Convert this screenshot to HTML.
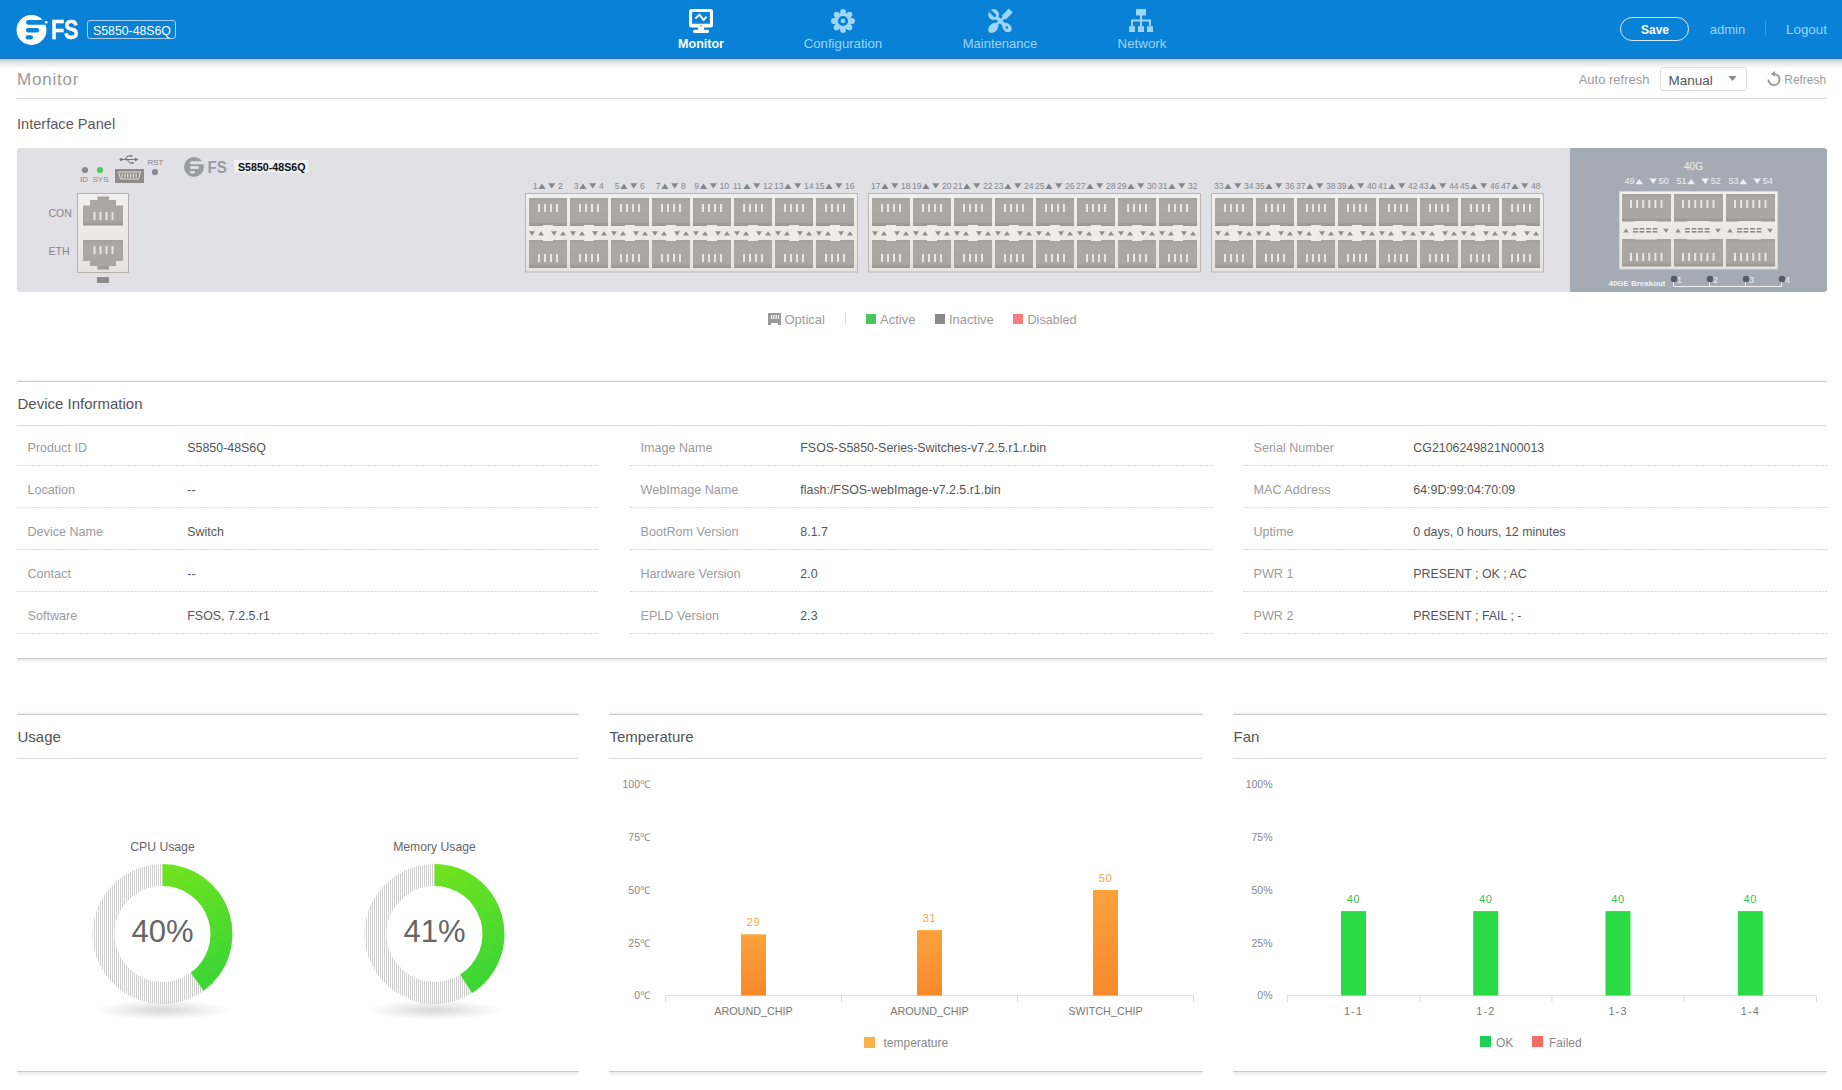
<!DOCTYPE html><html><head><meta charset="utf-8"><style>
html,body{margin:0;padding:0;width:1842px;height:1090px;overflow:hidden;background:#fff;font-family:"Liberation Sans", sans-serif;}
.t{position:absolute;white-space:nowrap;}
svg{position:absolute;overflow:visible}
</style></head><body>
<div style="position:absolute;left:0px;top:0px;width:1842px;height:58px;background:#0981d6;"></div>
<div style="position:absolute;left:0px;top:58px;width:1842px;height:1px;background:#2774b0;"></div>
<div style="position:absolute;left:0px;top:59px;width:1842px;height:1px;background:#a8cbe6;"></div>
<div style="position:absolute;left:0px;top:60px;width:1842px;height:9px;background:linear-gradient(#c7d0d9,#e2e4e6 25%,#f3f3f3 60%,#fff);"></div>
<svg style="left:0;top:0" width="200" height="58">
<circle cx="31.5" cy="30" r="15" fill="#fff"/>
<rect x="26" y="20" width="22" height="4.8" rx="2.4" fill="#0a83d8"/>
<rect x="26" y="28" width="13.2" height="4.6" rx="2.3" fill="#0a83d8"/>
<rect x="25.6" y="35.2" width="7.4" height="4.2" rx="2.1" fill="#0a83d8"/>
<circle cx="46.2" cy="22.3" r="1.3" fill="#fff"/>
</svg>
<div class="t" style="left:51.4px;top:16.54px;font-size:27px;line-height:27px;color:#fff;font-weight:700;transform:scaleX(0.81);transform-origin:0 0;letter-spacing:-0.3px;-webkit-text-stroke:0.45px #fff;">FS</div>
<div style="position:absolute;left:87px;top:20px;width:89px;height:19px;border:1px solid #a9d3f5;border-radius:3px;box-sizing:border-box;"></div>
<div class="t" style="left:93px;top:24.59px;font-size:12.3px;line-height:12.3px;color:#fff;font-weight:400;">S5850-48S6Q</div>
<svg style="left:689px;top:9px" width="24" height="24" viewBox="0 0 24 24">
<path d="M2.5,0 H21.5 A2.5,2.5 0 0 1 24,2.5 V16.1 A2.5,2.5 0 0 1 21.5,18.6 H2.5 A2.5,2.5 0 0 1 0,16.1 V2.5 A2.5,2.5 0 0 1 2.5,0 Z M3.1,3 V14.8 H20.9 V3 Z" fill="#fff" fill-rule="evenodd"/>
<polyline points="6.4,9.5 10.5,5.7 14.6,11 17.5,7.6" fill="none" stroke="#fff" stroke-width="1.9"/>
<path d="M8.6,18 H15.4 L14.6,21.2 H9.4 Z" fill="#fff"/>
<rect x="4" y="20.8" width="16" height="3.1" rx="1.5" fill="#fff"/>
<circle cx="12.2" cy="16.8" r="0.8" fill="#2a6aa0"/>
</svg>
<div class="t" style="left:401px;width:600px;text-align:center;top:38.22px;font-size:12.5px;line-height:12.5px;color:#fff;font-weight:700;">Monitor</div>
<svg style="left:831px;top:9px" width="24" height="24" viewBox="0 0 24 24">
<circle cx="12" cy="12" r="8.6" fill="#9dd5fb"/><circle cx="12.00" cy="2.90" r="2.9" fill="#9dd5fb"/><circle cx="18.43" cy="5.57" r="2.9" fill="#9dd5fb"/><circle cx="21.10" cy="12.00" r="2.9" fill="#9dd5fb"/><circle cx="18.43" cy="18.43" r="2.9" fill="#9dd5fb"/><circle cx="12.00" cy="21.10" r="2.9" fill="#9dd5fb"/><circle cx="5.57" cy="18.43" r="2.9" fill="#9dd5fb"/><circle cx="2.90" cy="12.00" r="2.9" fill="#9dd5fb"/><circle cx="5.57" cy="5.57" r="2.9" fill="#9dd5fb"/>
<circle cx="12" cy="12" r="5.1" fill="#0981d6"/>
<circle cx="12" cy="12" r="2.3" fill="#9dd5fb"/>
</svg>
<div class="t" style="left:543px;width:600px;text-align:center;top:36.83px;font-size:13.2px;line-height:13.2px;color:#9dd5fb;font-weight:400;">Configuration</div>
<svg style="left:980px;top:5px" width="40" height="32" viewBox="0 0 40 32">
<defs><mask id="wm" maskUnits="userSpaceOnUse" x="0" y="0" width="40" height="32">
<rect x="0" y="0" width="40" height="32" fill="#fff"/>
<rect x="6.5" y="-1.5" width="8" height="3" fill="#000" transform="translate(13.8,9.6) rotate(45) translate(-12,0)"/>
<circle cx="26.9" cy="22.6" r="1.25" fill="#000"/>
</mask></defs>
<g fill="#9dd5fb" mask="url(#wm)">
<circle cx="13.6" cy="9.5" r="5.4"/>
<line x1="13.6" y1="9.5" x2="27" y2="22.6" stroke="#9dd5fb" stroke-width="3.6"/>
<ellipse cx="27" cy="22.6" rx="5.3" ry="4.1" transform="rotate(45 27 22.6)"/>
</g>
<g fill="#9dd5fb">
<rect x="-5" y="-2.8" width="10" height="5.6" transform="translate(27.2,9.1) rotate(-45)"/>
<line x1="26" y1="10.5" x2="14" y2="22" stroke="#9dd5fb" stroke-width="2.6"/>
<ellipse cx="13.3" cy="22.8" rx="6" ry="4.1" transform="rotate(-45 13.3 22.8)"/>
</g>
</svg>
<div class="t" style="left:700px;width:600px;text-align:center;top:37.00px;font-size:13px;line-height:13px;color:#9dd5fb;font-weight:400;">Maintenance</div>
<svg style="left:1129px;top:9px" width="24" height="24" viewBox="0 0 24 24">
<rect x="7" y="0" width="10" height="6.5" fill="#9dd5fb"/>
<rect x="11" y="6" width="2" height="5" fill="#9dd5fb"/>
<rect x="2" y="10.5" width="20" height="2" fill="#9dd5fb"/>
<rect x="2" y="11" width="2" height="6" fill="#9dd5fb"/>
<rect x="11" y="11" width="2" height="6" fill="#9dd5fb"/>
<rect x="20" y="11" width="2" height="6" fill="#9dd5fb"/>
<rect x="0" y="17.2" width="6" height="5.8" fill="#9dd5fb"/>
<rect x="9" y="17.2" width="6" height="5.8" fill="#9dd5fb"/>
<rect x="18" y="17.2" width="6" height="5.8" fill="#9dd5fb"/>
</svg>
<div class="t" style="left:842px;width:600px;text-align:center;top:36.74px;font-size:13.3px;line-height:13.3px;color:#9dd5fb;font-weight:400;">Network</div>
<div style="position:absolute;left:1620px;top:17px;width:69px;height:24px;border:1.5px solid #d4ebfb;border-radius:12px;box-sizing:border-box;"></div>
<div class="t" style="left:1355px;width:600px;text-align:center;top:24.14px;font-size:12px;line-height:12px;color:#fff;font-weight:700;">Save</div>
<div class="t" style="left:1427.5px;width:600px;text-align:center;top:23.00px;font-size:13px;line-height:13px;color:#9dd5fb;font-weight:400;">admin</div>
<div style="position:absolute;left:1765px;top:21px;width:1px;height:15px;background:#3d9be0;"></div>
<div class="t" style="left:1506.5px;width:600px;text-align:center;top:22.66px;font-size:13.4px;line-height:13.4px;color:#9dd5fb;font-weight:400;">Logout</div>
<div class="t" style="left:17px;top:71.01px;font-size:17px;line-height:17px;color:#9a9a9a;font-weight:400;letter-spacing:0.8px;">Monitor</div>
<div class="t" style="right:192.5px;text-align:right;top:73.00px;font-size:13px;line-height:13px;color:#9b9b9b;font-weight:400;">Auto refresh</div>
<div style="position:absolute;left:1660px;top:67px;width:87px;height:24px;border:1px solid #dcdcdc;border-radius:3px;box-sizing:border-box;background:#fff;"></div>
<div class="t" style="left:1668.5px;top:73.57px;font-size:13.5px;line-height:13.5px;color:#555;font-weight:400;">Manual</div>
<svg style="left:1728px;top:76px" width="9" height="6"><polygon points="0.5,0 8.5,0 4.5,5" fill="#888"/></svg>
<svg style="left:1760px;top:66px" width="30" height="26" viewBox="0 0 30 26">
<path d="M8.4,13.5 A5.6,5.6 0 1 0 14.4,7.9" fill="none" stroke="#999" stroke-width="1.9"/>
<polygon points="10.8,7.9 15,5.1 15,10.7" fill="#999"/>
</svg>
<div class="t" style="right:16px;text-align:right;top:73.84px;font-size:12px;line-height:12px;color:#9b9b9b;font-weight:400;font-size:11.9px;">Refresh</div>
<div style="position:absolute;left:17px;top:98px;width:1810px;height:1px;background:#d6d6d6;"></div>
<div class="t" style="left:17px;top:116.64px;font-size:14.6px;line-height:14.6px;color:#5a5a5a;font-weight:400;">Interface Panel</div>
<svg style="left:0;top:0" width="1842" height="300"><defs><linearGradient id="pg" x1="0" y1="0" x2="0" y2="1"><stop offset="0" stop-color="#a3a09d"/><stop offset="0.15" stop-color="#aba8a5"/><stop offset="0.85" stop-color="#a9a6a3"/><stop offset="1" stop-color="#979492"/></linearGradient><linearGradient id="fr" x1="0" y1="0" x2="0" y2="1"><stop offset="0" stop-color="#f2f0ee"/><stop offset="1" stop-color="#e6e3df"/></linearGradient></defs><path d="M20,148 H1570 V292 H20 A3,3 0 0 1 17,289 V151 A3,3 0 0 1 20,148 Z" fill="#e1e0e5"/><path d="M1570,148 H1824 A3,3 0 0 1 1827,151 V289 A3,3 0 0 1 1824,292 H1570 Z" fill="#a4abb5"/><circle cx="85" cy="170" r="3.1" fill="#8a8b90"/><circle cx="100" cy="170" r="3.1" fill="#4ec95c"/><circle cx="155" cy="172" r="3.1" fill="#8a8b90"/><text x="80" y="182" font-size="8" fill="#85868b" font-family="Liberation Sans">ID</text><text x="92.5" y="182" font-size="8" fill="#85868b" font-family="Liberation Sans">SYS</text><text x="147.5" y="165" font-size="8" fill="#85868b" font-family="Liberation Sans">RST</text><g fill="none" stroke="#77787c" stroke-width="1.1"><path d="M121,159.5 H136"/><path d="M125,159.5 L128,156 H131"/><path d="M127,159.5 L130,163 H132"/></g><circle cx="121" cy="159.5" r="1.5" fill="#77787c"/><polygon points="135,157.5 138.5,159.5 135,161.5" fill="#77787c"/><circle cx="131.5" cy="156" r="1" fill="#77787c"/><rect x="131.5" y="162" width="2" height="2" fill="#77787c"/><rect x="115" y="169" width="29" height="14" fill="#8e8c8a"/><path d="M118.5,172 H140.5 L138.5,179 H120.5 Z" fill="none" stroke="#e6e2dc" stroke-width="1"/><rect x="121.5" y="173.5" width="1.2" height="4" fill="#e6e2dc"/><rect x="124.3" y="173.5" width="1.2" height="4" fill="#e6e2dc"/><rect x="127.1" y="173.5" width="1.2" height="4" fill="#e6e2dc"/><rect x="129.9" y="173.5" width="1.2" height="4" fill="#e6e2dc"/><rect x="132.7" y="173.5" width="1.2" height="4" fill="#e6e2dc"/><rect x="135.5" y="173.5" width="1.2" height="4" fill="#e6e2dc"/><circle cx="194" cy="167" r="10" fill="#9a9ba3"/><rect x="190" y="161.2" width="15" height="3" rx="1.5" fill="#e1e0e5"/><rect x="190" y="166" width="9" height="3" rx="1.5" fill="#e1e0e5"/><rect x="190" y="171" width="5" height="2.6" rx="1.3" fill="#e1e0e5"/><text x="207.5" y="172.6" style="font-size:16.8px;font-weight:bold;font-family:Liberation Sans" fill="#9a9ba3" transform="translate(207.5,0) scale(0.9,1) translate(-207.5,0)">FS</text><rect x="234" y="160" width="74" height="12.5" fill="#eef0f4"/><text x="238" y="171" font-size="10" font-weight="700" fill="#111" font-family="Liberation Sans" textLength="67.5" lengthAdjust="spacingAndGlyphs">S5850-48S6Q</text><text x="48.5" y="217" font-size="10.5" fill="#85868b" font-family="Liberation Sans">CON</text><text x="48.5" y="255" font-size="10.5" fill="#85868b" font-family="Liberation Sans">ETH</text><rect x="77.5" y="193.5" width="51" height="79" fill="url(#fr)" stroke="#b7b1ab" stroke-width="1"/><path d="M97.5,196.5 H109 V200 H116 V205.5 H123 V225.5 H83 V205.5 H90 V200 H97.5 Z" fill="url(#pg)"/><path d="M97.5,269.5 H109 V266 H116 V261 H123 V240 H83 V261 H90 V266 H97.5 Z" fill="url(#pg)"/><rect x="93.5" y="212" width="2" height="8" fill="#e9e5df"/><rect x="93.5" y="246" width="2" height="8" fill="#e9e5df"/><rect x="99.5" y="212" width="2" height="8" fill="#e9e5df"/><rect x="99.5" y="246" width="2" height="8" fill="#e9e5df"/><rect x="105.5" y="212" width="2" height="8" fill="#e9e5df"/><rect x="105.5" y="246" width="2" height="8" fill="#e9e5df"/><rect x="111.5" y="212" width="2" height="8" fill="#e9e5df"/><rect x="111.5" y="246" width="2" height="8" fill="#e9e5df"/><rect x="97" y="277" width="12" height="6" fill="#8e8c8a"/><rect x="525.5" y="193.5" width="332" height="78.5" fill="url(#fr)" stroke="#bab5b0" stroke-width="1"/><text x="532.70" y="189.00" font-size="8.6" fill="#85868b" font-family="Liberation Sans">1</text><polygon points="538.35,188.90 545.55,188.90 541.95,183.60" fill="#85868b"/><polygon points="548.15,183.30 555.35,183.30 551.75,188.60" fill="#85868b"/><text x="557.95" y="189.00" font-size="8.6" fill="#85868b" font-family="Liberation Sans">2</text><rect x="529" y="198" width="38" height="28" fill="url(#pg)"/><rect x="529" y="240" width="38" height="28" fill="url(#pg)"/><rect x="538" y="204" width="2" height="8" fill="#e9e5df"/><rect x="538" y="254" width="2" height="8" fill="#e9e5df"/><rect x="544" y="204" width="2" height="8" fill="#e9e5df"/><rect x="544" y="254" width="2" height="8" fill="#e9e5df"/><rect x="550" y="204" width="2" height="8" fill="#e9e5df"/><rect x="550" y="254" width="2" height="8" fill="#e9e5df"/><rect x="556" y="204" width="2" height="8" fill="#e9e5df"/><rect x="556" y="254" width="2" height="8" fill="#e9e5df"/><rect x="543" y="225" width="10" height="16" fill="#efedeb"/><polygon points="529.00,231.30 535.00,231.30 532.00,235.70" fill="#8f8d8b"/><polygon points="538.00,235.60 544.00,235.60 541.00,231.20" fill="#8f8d8b"/><polygon points="551.00,231.30 557.00,231.30 554.00,235.70" fill="#8f8d8b"/><polygon points="560.00,235.60 566.00,235.60 563.00,231.20" fill="#8f8d8b"/><text x="573.70" y="189.00" font-size="8.6" fill="#85868b" font-family="Liberation Sans">3</text><polygon points="579.35,188.90 586.55,188.90 582.95,183.60" fill="#85868b"/><polygon points="589.15,183.30 596.35,183.30 592.75,188.60" fill="#85868b"/><text x="598.95" y="189.00" font-size="8.6" fill="#85868b" font-family="Liberation Sans">4</text><rect x="570" y="198" width="38" height="28" fill="url(#pg)"/><rect x="570" y="240" width="38" height="28" fill="url(#pg)"/><rect x="579" y="204" width="2" height="8" fill="#e9e5df"/><rect x="579" y="254" width="2" height="8" fill="#e9e5df"/><rect x="585" y="204" width="2" height="8" fill="#e9e5df"/><rect x="585" y="254" width="2" height="8" fill="#e9e5df"/><rect x="591" y="204" width="2" height="8" fill="#e9e5df"/><rect x="591" y="254" width="2" height="8" fill="#e9e5df"/><rect x="597" y="204" width="2" height="8" fill="#e9e5df"/><rect x="597" y="254" width="2" height="8" fill="#e9e5df"/><rect x="584" y="225" width="10" height="16" fill="#efedeb"/><polygon points="570.00,231.30 576.00,231.30 573.00,235.70" fill="#8f8d8b"/><polygon points="579.00,235.60 585.00,235.60 582.00,231.20" fill="#8f8d8b"/><polygon points="592.00,231.30 598.00,231.30 595.00,235.70" fill="#8f8d8b"/><polygon points="601.00,235.60 607.00,235.60 604.00,231.20" fill="#8f8d8b"/><text x="614.70" y="189.00" font-size="8.6" fill="#85868b" font-family="Liberation Sans">5</text><polygon points="620.35,188.90 627.55,188.90 623.95,183.60" fill="#85868b"/><polygon points="630.15,183.30 637.35,183.30 633.75,188.60" fill="#85868b"/><text x="639.95" y="189.00" font-size="8.6" fill="#85868b" font-family="Liberation Sans">6</text><rect x="611" y="198" width="38" height="28" fill="url(#pg)"/><rect x="611" y="240" width="38" height="28" fill="url(#pg)"/><rect x="620" y="204" width="2" height="8" fill="#e9e5df"/><rect x="620" y="254" width="2" height="8" fill="#e9e5df"/><rect x="626" y="204" width="2" height="8" fill="#e9e5df"/><rect x="626" y="254" width="2" height="8" fill="#e9e5df"/><rect x="632" y="204" width="2" height="8" fill="#e9e5df"/><rect x="632" y="254" width="2" height="8" fill="#e9e5df"/><rect x="638" y="204" width="2" height="8" fill="#e9e5df"/><rect x="638" y="254" width="2" height="8" fill="#e9e5df"/><rect x="625" y="225" width="10" height="16" fill="#efedeb"/><polygon points="611.00,231.30 617.00,231.30 614.00,235.70" fill="#8f8d8b"/><polygon points="620.00,235.60 626.00,235.60 623.00,231.20" fill="#8f8d8b"/><polygon points="633.00,231.30 639.00,231.30 636.00,235.70" fill="#8f8d8b"/><polygon points="642.00,235.60 648.00,235.60 645.00,231.20" fill="#8f8d8b"/><text x="655.70" y="189.00" font-size="8.6" fill="#85868b" font-family="Liberation Sans">7</text><polygon points="661.35,188.90 668.55,188.90 664.95,183.60" fill="#85868b"/><polygon points="671.15,183.30 678.35,183.30 674.75,188.60" fill="#85868b"/><text x="680.95" y="189.00" font-size="8.6" fill="#85868b" font-family="Liberation Sans">8</text><rect x="652" y="198" width="38" height="28" fill="url(#pg)"/><rect x="652" y="240" width="38" height="28" fill="url(#pg)"/><rect x="661" y="204" width="2" height="8" fill="#e9e5df"/><rect x="661" y="254" width="2" height="8" fill="#e9e5df"/><rect x="667" y="204" width="2" height="8" fill="#e9e5df"/><rect x="667" y="254" width="2" height="8" fill="#e9e5df"/><rect x="673" y="204" width="2" height="8" fill="#e9e5df"/><rect x="673" y="254" width="2" height="8" fill="#e9e5df"/><rect x="679" y="204" width="2" height="8" fill="#e9e5df"/><rect x="679" y="254" width="2" height="8" fill="#e9e5df"/><rect x="666" y="225" width="10" height="16" fill="#efedeb"/><polygon points="652.00,231.30 658.00,231.30 655.00,235.70" fill="#8f8d8b"/><polygon points="661.00,235.60 667.00,235.60 664.00,231.20" fill="#8f8d8b"/><polygon points="674.00,231.30 680.00,231.30 677.00,235.70" fill="#8f8d8b"/><polygon points="683.00,235.60 689.00,235.60 686.00,231.20" fill="#8f8d8b"/><text x="694.33" y="189.00" font-size="8.6" fill="#85868b" font-family="Liberation Sans">9</text><polygon points="699.98,188.90 707.18,188.90 703.58,183.60" fill="#85868b"/><polygon points="709.77,183.30 716.98,183.30 713.38,188.60" fill="#85868b"/><text x="719.57" y="189.00" font-size="8.6" fill="#85868b" font-family="Liberation Sans">10</text><rect x="693" y="198" width="38" height="28" fill="url(#pg)"/><rect x="693" y="240" width="38" height="28" fill="url(#pg)"/><rect x="702" y="204" width="2" height="8" fill="#e9e5df"/><rect x="702" y="254" width="2" height="8" fill="#e9e5df"/><rect x="708" y="204" width="2" height="8" fill="#e9e5df"/><rect x="708" y="254" width="2" height="8" fill="#e9e5df"/><rect x="714" y="204" width="2" height="8" fill="#e9e5df"/><rect x="714" y="254" width="2" height="8" fill="#e9e5df"/><rect x="720" y="204" width="2" height="8" fill="#e9e5df"/><rect x="720" y="254" width="2" height="8" fill="#e9e5df"/><rect x="707" y="225" width="10" height="16" fill="#efedeb"/><polygon points="693.00,231.30 699.00,231.30 696.00,235.70" fill="#8f8d8b"/><polygon points="702.00,235.60 708.00,235.60 705.00,231.20" fill="#8f8d8b"/><polygon points="715.00,231.30 721.00,231.30 718.00,235.70" fill="#8f8d8b"/><polygon points="724.00,235.60 730.00,235.60 727.00,231.20" fill="#8f8d8b"/><text x="732.95" y="189.00" font-size="8.6" fill="#85868b" font-family="Liberation Sans">11</text><polygon points="743.35,188.90 750.55,188.90 746.95,183.60" fill="#85868b"/><polygon points="753.15,183.30 760.35,183.30 756.75,188.60" fill="#85868b"/><text x="762.95" y="189.00" font-size="8.6" fill="#85868b" font-family="Liberation Sans">12</text><rect x="734" y="198" width="38" height="28" fill="url(#pg)"/><rect x="734" y="240" width="38" height="28" fill="url(#pg)"/><rect x="743" y="204" width="2" height="8" fill="#e9e5df"/><rect x="743" y="254" width="2" height="8" fill="#e9e5df"/><rect x="749" y="204" width="2" height="8" fill="#e9e5df"/><rect x="749" y="254" width="2" height="8" fill="#e9e5df"/><rect x="755" y="204" width="2" height="8" fill="#e9e5df"/><rect x="755" y="254" width="2" height="8" fill="#e9e5df"/><rect x="761" y="204" width="2" height="8" fill="#e9e5df"/><rect x="761" y="254" width="2" height="8" fill="#e9e5df"/><rect x="748" y="225" width="10" height="16" fill="#efedeb"/><polygon points="734.00,231.30 740.00,231.30 737.00,235.70" fill="#8f8d8b"/><polygon points="743.00,235.60 749.00,235.60 746.00,231.20" fill="#8f8d8b"/><polygon points="756.00,231.30 762.00,231.30 759.00,235.70" fill="#8f8d8b"/><polygon points="765.00,235.60 771.00,235.60 768.00,231.20" fill="#8f8d8b"/><text x="773.95" y="189.00" font-size="8.6" fill="#85868b" font-family="Liberation Sans">13</text><polygon points="784.35,188.90 791.55,188.90 787.95,183.60" fill="#85868b"/><polygon points="794.15,183.30 801.35,183.30 797.75,188.60" fill="#85868b"/><text x="803.95" y="189.00" font-size="8.6" fill="#85868b" font-family="Liberation Sans">14</text><rect x="775" y="198" width="38" height="28" fill="url(#pg)"/><rect x="775" y="240" width="38" height="28" fill="url(#pg)"/><rect x="784" y="204" width="2" height="8" fill="#e9e5df"/><rect x="784" y="254" width="2" height="8" fill="#e9e5df"/><rect x="790" y="204" width="2" height="8" fill="#e9e5df"/><rect x="790" y="254" width="2" height="8" fill="#e9e5df"/><rect x="796" y="204" width="2" height="8" fill="#e9e5df"/><rect x="796" y="254" width="2" height="8" fill="#e9e5df"/><rect x="802" y="204" width="2" height="8" fill="#e9e5df"/><rect x="802" y="254" width="2" height="8" fill="#e9e5df"/><rect x="789" y="225" width="10" height="16" fill="#efedeb"/><polygon points="775.00,231.30 781.00,231.30 778.00,235.70" fill="#8f8d8b"/><polygon points="784.00,235.60 790.00,235.60 787.00,231.20" fill="#8f8d8b"/><polygon points="797.00,231.30 803.00,231.30 800.00,235.70" fill="#8f8d8b"/><polygon points="806.00,235.60 812.00,235.60 809.00,231.20" fill="#8f8d8b"/><text x="814.95" y="189.00" font-size="8.6" fill="#85868b" font-family="Liberation Sans">15</text><polygon points="825.35,188.90 832.55,188.90 828.95,183.60" fill="#85868b"/><polygon points="835.15,183.30 842.35,183.30 838.75,188.60" fill="#85868b"/><text x="844.95" y="189.00" font-size="8.6" fill="#85868b" font-family="Liberation Sans">16</text><rect x="816" y="198" width="38" height="28" fill="url(#pg)"/><rect x="816" y="240" width="38" height="28" fill="url(#pg)"/><rect x="825" y="204" width="2" height="8" fill="#e9e5df"/><rect x="825" y="254" width="2" height="8" fill="#e9e5df"/><rect x="831" y="204" width="2" height="8" fill="#e9e5df"/><rect x="831" y="254" width="2" height="8" fill="#e9e5df"/><rect x="837" y="204" width="2" height="8" fill="#e9e5df"/><rect x="837" y="254" width="2" height="8" fill="#e9e5df"/><rect x="843" y="204" width="2" height="8" fill="#e9e5df"/><rect x="843" y="254" width="2" height="8" fill="#e9e5df"/><rect x="830" y="225" width="10" height="16" fill="#efedeb"/><polygon points="816.00,231.30 822.00,231.30 819.00,235.70" fill="#8f8d8b"/><polygon points="825.00,235.60 831.00,235.60 828.00,231.20" fill="#8f8d8b"/><polygon points="838.00,231.30 844.00,231.30 841.00,235.70" fill="#8f8d8b"/><polygon points="847.00,235.60 853.00,235.60 850.00,231.20" fill="#8f8d8b"/><rect x="868.5" y="193.5" width="332" height="78.5" fill="url(#fr)" stroke="#bab5b0" stroke-width="1"/><text x="870.95" y="189.00" font-size="8.6" fill="#85868b" font-family="Liberation Sans">17</text><polygon points="881.35,188.90 888.55,188.90 884.95,183.60" fill="#85868b"/><polygon points="891.15,183.30 898.35,183.30 894.75,188.60" fill="#85868b"/><text x="900.95" y="189.00" font-size="8.6" fill="#85868b" font-family="Liberation Sans">18</text><rect x="872" y="198" width="38" height="28" fill="url(#pg)"/><rect x="872" y="240" width="38" height="28" fill="url(#pg)"/><rect x="881" y="204" width="2" height="8" fill="#e9e5df"/><rect x="881" y="254" width="2" height="8" fill="#e9e5df"/><rect x="887" y="204" width="2" height="8" fill="#e9e5df"/><rect x="887" y="254" width="2" height="8" fill="#e9e5df"/><rect x="893" y="204" width="2" height="8" fill="#e9e5df"/><rect x="893" y="254" width="2" height="8" fill="#e9e5df"/><rect x="899" y="204" width="2" height="8" fill="#e9e5df"/><rect x="899" y="254" width="2" height="8" fill="#e9e5df"/><rect x="886" y="225" width="10" height="16" fill="#efedeb"/><polygon points="872.00,231.30 878.00,231.30 875.00,235.70" fill="#8f8d8b"/><polygon points="881.00,235.60 887.00,235.60 884.00,231.20" fill="#8f8d8b"/><polygon points="894.00,231.30 900.00,231.30 897.00,235.70" fill="#8f8d8b"/><polygon points="903.00,235.60 909.00,235.60 906.00,231.20" fill="#8f8d8b"/><text x="911.95" y="189.00" font-size="8.6" fill="#85868b" font-family="Liberation Sans">19</text><polygon points="922.35,188.90 929.55,188.90 925.95,183.60" fill="#85868b"/><polygon points="932.15,183.30 939.35,183.30 935.75,188.60" fill="#85868b"/><text x="941.95" y="189.00" font-size="8.6" fill="#85868b" font-family="Liberation Sans">20</text><rect x="913" y="198" width="38" height="28" fill="url(#pg)"/><rect x="913" y="240" width="38" height="28" fill="url(#pg)"/><rect x="922" y="204" width="2" height="8" fill="#e9e5df"/><rect x="922" y="254" width="2" height="8" fill="#e9e5df"/><rect x="928" y="204" width="2" height="8" fill="#e9e5df"/><rect x="928" y="254" width="2" height="8" fill="#e9e5df"/><rect x="934" y="204" width="2" height="8" fill="#e9e5df"/><rect x="934" y="254" width="2" height="8" fill="#e9e5df"/><rect x="940" y="204" width="2" height="8" fill="#e9e5df"/><rect x="940" y="254" width="2" height="8" fill="#e9e5df"/><rect x="927" y="225" width="10" height="16" fill="#efedeb"/><polygon points="913.00,231.30 919.00,231.30 916.00,235.70" fill="#8f8d8b"/><polygon points="922.00,235.60 928.00,235.60 925.00,231.20" fill="#8f8d8b"/><polygon points="935.00,231.30 941.00,231.30 938.00,235.70" fill="#8f8d8b"/><polygon points="944.00,235.60 950.00,235.60 947.00,231.20" fill="#8f8d8b"/><text x="952.95" y="189.00" font-size="8.6" fill="#85868b" font-family="Liberation Sans">21</text><polygon points="963.35,188.90 970.55,188.90 966.95,183.60" fill="#85868b"/><polygon points="973.15,183.30 980.35,183.30 976.75,188.60" fill="#85868b"/><text x="982.95" y="189.00" font-size="8.6" fill="#85868b" font-family="Liberation Sans">22</text><rect x="954" y="198" width="38" height="28" fill="url(#pg)"/><rect x="954" y="240" width="38" height="28" fill="url(#pg)"/><rect x="963" y="204" width="2" height="8" fill="#e9e5df"/><rect x="963" y="254" width="2" height="8" fill="#e9e5df"/><rect x="969" y="204" width="2" height="8" fill="#e9e5df"/><rect x="969" y="254" width="2" height="8" fill="#e9e5df"/><rect x="975" y="204" width="2" height="8" fill="#e9e5df"/><rect x="975" y="254" width="2" height="8" fill="#e9e5df"/><rect x="981" y="204" width="2" height="8" fill="#e9e5df"/><rect x="981" y="254" width="2" height="8" fill="#e9e5df"/><rect x="968" y="225" width="10" height="16" fill="#efedeb"/><polygon points="954.00,231.30 960.00,231.30 957.00,235.70" fill="#8f8d8b"/><polygon points="963.00,235.60 969.00,235.60 966.00,231.20" fill="#8f8d8b"/><polygon points="976.00,231.30 982.00,231.30 979.00,235.70" fill="#8f8d8b"/><polygon points="985.00,235.60 991.00,235.60 988.00,231.20" fill="#8f8d8b"/><text x="993.95" y="189.00" font-size="8.6" fill="#85868b" font-family="Liberation Sans">23</text><polygon points="1004.35,188.90 1011.55,188.90 1007.95,183.60" fill="#85868b"/><polygon points="1014.15,183.30 1021.35,183.30 1017.75,188.60" fill="#85868b"/><text x="1023.95" y="189.00" font-size="8.6" fill="#85868b" font-family="Liberation Sans">24</text><rect x="995" y="198" width="38" height="28" fill="url(#pg)"/><rect x="995" y="240" width="38" height="28" fill="url(#pg)"/><rect x="1004" y="204" width="2" height="8" fill="#e9e5df"/><rect x="1004" y="254" width="2" height="8" fill="#e9e5df"/><rect x="1010" y="204" width="2" height="8" fill="#e9e5df"/><rect x="1010" y="254" width="2" height="8" fill="#e9e5df"/><rect x="1016" y="204" width="2" height="8" fill="#e9e5df"/><rect x="1016" y="254" width="2" height="8" fill="#e9e5df"/><rect x="1022" y="204" width="2" height="8" fill="#e9e5df"/><rect x="1022" y="254" width="2" height="8" fill="#e9e5df"/><rect x="1009" y="225" width="10" height="16" fill="#efedeb"/><polygon points="995.00,231.30 1001.00,231.30 998.00,235.70" fill="#8f8d8b"/><polygon points="1004.00,235.60 1010.00,235.60 1007.00,231.20" fill="#8f8d8b"/><polygon points="1017.00,231.30 1023.00,231.30 1020.00,235.70" fill="#8f8d8b"/><polygon points="1026.00,235.60 1032.00,235.60 1029.00,231.20" fill="#8f8d8b"/><text x="1034.95" y="189.00" font-size="8.6" fill="#85868b" font-family="Liberation Sans">25</text><polygon points="1045.35,188.90 1052.55,188.90 1048.95,183.60" fill="#85868b"/><polygon points="1055.15,183.30 1062.35,183.30 1058.75,188.60" fill="#85868b"/><text x="1064.95" y="189.00" font-size="8.6" fill="#85868b" font-family="Liberation Sans">26</text><rect x="1036" y="198" width="38" height="28" fill="url(#pg)"/><rect x="1036" y="240" width="38" height="28" fill="url(#pg)"/><rect x="1045" y="204" width="2" height="8" fill="#e9e5df"/><rect x="1045" y="254" width="2" height="8" fill="#e9e5df"/><rect x="1051" y="204" width="2" height="8" fill="#e9e5df"/><rect x="1051" y="254" width="2" height="8" fill="#e9e5df"/><rect x="1057" y="204" width="2" height="8" fill="#e9e5df"/><rect x="1057" y="254" width="2" height="8" fill="#e9e5df"/><rect x="1063" y="204" width="2" height="8" fill="#e9e5df"/><rect x="1063" y="254" width="2" height="8" fill="#e9e5df"/><rect x="1050" y="225" width="10" height="16" fill="#efedeb"/><polygon points="1036.00,231.30 1042.00,231.30 1039.00,235.70" fill="#8f8d8b"/><polygon points="1045.00,235.60 1051.00,235.60 1048.00,231.20" fill="#8f8d8b"/><polygon points="1058.00,231.30 1064.00,231.30 1061.00,235.70" fill="#8f8d8b"/><polygon points="1067.00,235.60 1073.00,235.60 1070.00,231.20" fill="#8f8d8b"/><text x="1075.95" y="189.00" font-size="8.6" fill="#85868b" font-family="Liberation Sans">27</text><polygon points="1086.35,188.90 1093.55,188.90 1089.95,183.60" fill="#85868b"/><polygon points="1096.15,183.30 1103.35,183.30 1099.75,188.60" fill="#85868b"/><text x="1105.95" y="189.00" font-size="8.6" fill="#85868b" font-family="Liberation Sans">28</text><rect x="1077" y="198" width="38" height="28" fill="url(#pg)"/><rect x="1077" y="240" width="38" height="28" fill="url(#pg)"/><rect x="1086" y="204" width="2" height="8" fill="#e9e5df"/><rect x="1086" y="254" width="2" height="8" fill="#e9e5df"/><rect x="1092" y="204" width="2" height="8" fill="#e9e5df"/><rect x="1092" y="254" width="2" height="8" fill="#e9e5df"/><rect x="1098" y="204" width="2" height="8" fill="#e9e5df"/><rect x="1098" y="254" width="2" height="8" fill="#e9e5df"/><rect x="1104" y="204" width="2" height="8" fill="#e9e5df"/><rect x="1104" y="254" width="2" height="8" fill="#e9e5df"/><rect x="1091" y="225" width="10" height="16" fill="#efedeb"/><polygon points="1077.00,231.30 1083.00,231.30 1080.00,235.70" fill="#8f8d8b"/><polygon points="1086.00,235.60 1092.00,235.60 1089.00,231.20" fill="#8f8d8b"/><polygon points="1099.00,231.30 1105.00,231.30 1102.00,235.70" fill="#8f8d8b"/><polygon points="1108.00,235.60 1114.00,235.60 1111.00,231.20" fill="#8f8d8b"/><text x="1116.95" y="189.00" font-size="8.6" fill="#85868b" font-family="Liberation Sans">29</text><polygon points="1127.35,188.90 1134.55,188.90 1130.95,183.60" fill="#85868b"/><polygon points="1137.15,183.30 1144.35,183.30 1140.75,188.60" fill="#85868b"/><text x="1146.95" y="189.00" font-size="8.6" fill="#85868b" font-family="Liberation Sans">30</text><rect x="1118" y="198" width="38" height="28" fill="url(#pg)"/><rect x="1118" y="240" width="38" height="28" fill="url(#pg)"/><rect x="1127" y="204" width="2" height="8" fill="#e9e5df"/><rect x="1127" y="254" width="2" height="8" fill="#e9e5df"/><rect x="1133" y="204" width="2" height="8" fill="#e9e5df"/><rect x="1133" y="254" width="2" height="8" fill="#e9e5df"/><rect x="1139" y="204" width="2" height="8" fill="#e9e5df"/><rect x="1139" y="254" width="2" height="8" fill="#e9e5df"/><rect x="1145" y="204" width="2" height="8" fill="#e9e5df"/><rect x="1145" y="254" width="2" height="8" fill="#e9e5df"/><rect x="1132" y="225" width="10" height="16" fill="#efedeb"/><polygon points="1118.00,231.30 1124.00,231.30 1121.00,235.70" fill="#8f8d8b"/><polygon points="1127.00,235.60 1133.00,235.60 1130.00,231.20" fill="#8f8d8b"/><polygon points="1140.00,231.30 1146.00,231.30 1143.00,235.70" fill="#8f8d8b"/><polygon points="1149.00,235.60 1155.00,235.60 1152.00,231.20" fill="#8f8d8b"/><text x="1157.95" y="189.00" font-size="8.6" fill="#85868b" font-family="Liberation Sans">31</text><polygon points="1168.35,188.90 1175.55,188.90 1171.95,183.60" fill="#85868b"/><polygon points="1178.15,183.30 1185.35,183.30 1181.75,188.60" fill="#85868b"/><text x="1187.95" y="189.00" font-size="8.6" fill="#85868b" font-family="Liberation Sans">32</text><rect x="1159" y="198" width="38" height="28" fill="url(#pg)"/><rect x="1159" y="240" width="38" height="28" fill="url(#pg)"/><rect x="1168" y="204" width="2" height="8" fill="#e9e5df"/><rect x="1168" y="254" width="2" height="8" fill="#e9e5df"/><rect x="1174" y="204" width="2" height="8" fill="#e9e5df"/><rect x="1174" y="254" width="2" height="8" fill="#e9e5df"/><rect x="1180" y="204" width="2" height="8" fill="#e9e5df"/><rect x="1180" y="254" width="2" height="8" fill="#e9e5df"/><rect x="1186" y="204" width="2" height="8" fill="#e9e5df"/><rect x="1186" y="254" width="2" height="8" fill="#e9e5df"/><rect x="1173" y="225" width="10" height="16" fill="#efedeb"/><polygon points="1159.00,231.30 1165.00,231.30 1162.00,235.70" fill="#8f8d8b"/><polygon points="1168.00,235.60 1174.00,235.60 1171.00,231.20" fill="#8f8d8b"/><polygon points="1181.00,231.30 1187.00,231.30 1184.00,235.70" fill="#8f8d8b"/><polygon points="1190.00,235.60 1196.00,235.60 1193.00,231.20" fill="#8f8d8b"/><rect x="1211.5" y="193.5" width="332" height="78.5" fill="url(#fr)" stroke="#bab5b0" stroke-width="1"/><text x="1213.95" y="189.00" font-size="8.6" fill="#85868b" font-family="Liberation Sans">33</text><polygon points="1224.35,188.90 1231.55,188.90 1227.95,183.60" fill="#85868b"/><polygon points="1234.15,183.30 1241.35,183.30 1237.75,188.60" fill="#85868b"/><text x="1243.95" y="189.00" font-size="8.6" fill="#85868b" font-family="Liberation Sans">34</text><rect x="1215" y="198" width="38" height="28" fill="url(#pg)"/><rect x="1215" y="240" width="38" height="28" fill="url(#pg)"/><rect x="1224" y="204" width="2" height="8" fill="#e9e5df"/><rect x="1224" y="254" width="2" height="8" fill="#e9e5df"/><rect x="1230" y="204" width="2" height="8" fill="#e9e5df"/><rect x="1230" y="254" width="2" height="8" fill="#e9e5df"/><rect x="1236" y="204" width="2" height="8" fill="#e9e5df"/><rect x="1236" y="254" width="2" height="8" fill="#e9e5df"/><rect x="1242" y="204" width="2" height="8" fill="#e9e5df"/><rect x="1242" y="254" width="2" height="8" fill="#e9e5df"/><rect x="1229" y="225" width="10" height="16" fill="#efedeb"/><polygon points="1215.00,231.30 1221.00,231.30 1218.00,235.70" fill="#8f8d8b"/><polygon points="1224.00,235.60 1230.00,235.60 1227.00,231.20" fill="#8f8d8b"/><polygon points="1237.00,231.30 1243.00,231.30 1240.00,235.70" fill="#8f8d8b"/><polygon points="1246.00,235.60 1252.00,235.60 1249.00,231.20" fill="#8f8d8b"/><text x="1254.95" y="189.00" font-size="8.6" fill="#85868b" font-family="Liberation Sans">35</text><polygon points="1265.35,188.90 1272.55,188.90 1268.95,183.60" fill="#85868b"/><polygon points="1275.15,183.30 1282.35,183.30 1278.75,188.60" fill="#85868b"/><text x="1284.95" y="189.00" font-size="8.6" fill="#85868b" font-family="Liberation Sans">36</text><rect x="1256" y="198" width="38" height="28" fill="url(#pg)"/><rect x="1256" y="240" width="38" height="28" fill="url(#pg)"/><rect x="1265" y="204" width="2" height="8" fill="#e9e5df"/><rect x="1265" y="254" width="2" height="8" fill="#e9e5df"/><rect x="1271" y="204" width="2" height="8" fill="#e9e5df"/><rect x="1271" y="254" width="2" height="8" fill="#e9e5df"/><rect x="1277" y="204" width="2" height="8" fill="#e9e5df"/><rect x="1277" y="254" width="2" height="8" fill="#e9e5df"/><rect x="1283" y="204" width="2" height="8" fill="#e9e5df"/><rect x="1283" y="254" width="2" height="8" fill="#e9e5df"/><rect x="1270" y="225" width="10" height="16" fill="#efedeb"/><polygon points="1256.00,231.30 1262.00,231.30 1259.00,235.70" fill="#8f8d8b"/><polygon points="1265.00,235.60 1271.00,235.60 1268.00,231.20" fill="#8f8d8b"/><polygon points="1278.00,231.30 1284.00,231.30 1281.00,235.70" fill="#8f8d8b"/><polygon points="1287.00,235.60 1293.00,235.60 1290.00,231.20" fill="#8f8d8b"/><text x="1295.95" y="189.00" font-size="8.6" fill="#85868b" font-family="Liberation Sans">37</text><polygon points="1306.35,188.90 1313.55,188.90 1309.95,183.60" fill="#85868b"/><polygon points="1316.15,183.30 1323.35,183.30 1319.75,188.60" fill="#85868b"/><text x="1325.95" y="189.00" font-size="8.6" fill="#85868b" font-family="Liberation Sans">38</text><rect x="1297" y="198" width="38" height="28" fill="url(#pg)"/><rect x="1297" y="240" width="38" height="28" fill="url(#pg)"/><rect x="1306" y="204" width="2" height="8" fill="#e9e5df"/><rect x="1306" y="254" width="2" height="8" fill="#e9e5df"/><rect x="1312" y="204" width="2" height="8" fill="#e9e5df"/><rect x="1312" y="254" width="2" height="8" fill="#e9e5df"/><rect x="1318" y="204" width="2" height="8" fill="#e9e5df"/><rect x="1318" y="254" width="2" height="8" fill="#e9e5df"/><rect x="1324" y="204" width="2" height="8" fill="#e9e5df"/><rect x="1324" y="254" width="2" height="8" fill="#e9e5df"/><rect x="1311" y="225" width="10" height="16" fill="#efedeb"/><polygon points="1297.00,231.30 1303.00,231.30 1300.00,235.70" fill="#8f8d8b"/><polygon points="1306.00,235.60 1312.00,235.60 1309.00,231.20" fill="#8f8d8b"/><polygon points="1319.00,231.30 1325.00,231.30 1322.00,235.70" fill="#8f8d8b"/><polygon points="1328.00,235.60 1334.00,235.60 1331.00,231.20" fill="#8f8d8b"/><text x="1336.95" y="189.00" font-size="8.6" fill="#85868b" font-family="Liberation Sans">39</text><polygon points="1347.35,188.90 1354.55,188.90 1350.95,183.60" fill="#85868b"/><polygon points="1357.15,183.30 1364.35,183.30 1360.75,188.60" fill="#85868b"/><text x="1366.95" y="189.00" font-size="8.6" fill="#85868b" font-family="Liberation Sans">40</text><rect x="1338" y="198" width="38" height="28" fill="url(#pg)"/><rect x="1338" y="240" width="38" height="28" fill="url(#pg)"/><rect x="1347" y="204" width="2" height="8" fill="#e9e5df"/><rect x="1347" y="254" width="2" height="8" fill="#e9e5df"/><rect x="1353" y="204" width="2" height="8" fill="#e9e5df"/><rect x="1353" y="254" width="2" height="8" fill="#e9e5df"/><rect x="1359" y="204" width="2" height="8" fill="#e9e5df"/><rect x="1359" y="254" width="2" height="8" fill="#e9e5df"/><rect x="1365" y="204" width="2" height="8" fill="#e9e5df"/><rect x="1365" y="254" width="2" height="8" fill="#e9e5df"/><rect x="1352" y="225" width="10" height="16" fill="#efedeb"/><polygon points="1338.00,231.30 1344.00,231.30 1341.00,235.70" fill="#8f8d8b"/><polygon points="1347.00,235.60 1353.00,235.60 1350.00,231.20" fill="#8f8d8b"/><polygon points="1360.00,231.30 1366.00,231.30 1363.00,235.70" fill="#8f8d8b"/><polygon points="1369.00,235.60 1375.00,235.60 1372.00,231.20" fill="#8f8d8b"/><text x="1377.95" y="189.00" font-size="8.6" fill="#85868b" font-family="Liberation Sans">41</text><polygon points="1388.35,188.90 1395.55,188.90 1391.95,183.60" fill="#85868b"/><polygon points="1398.15,183.30 1405.35,183.30 1401.75,188.60" fill="#85868b"/><text x="1407.95" y="189.00" font-size="8.6" fill="#85868b" font-family="Liberation Sans">42</text><rect x="1379" y="198" width="38" height="28" fill="url(#pg)"/><rect x="1379" y="240" width="38" height="28" fill="url(#pg)"/><rect x="1388" y="204" width="2" height="8" fill="#e9e5df"/><rect x="1388" y="254" width="2" height="8" fill="#e9e5df"/><rect x="1394" y="204" width="2" height="8" fill="#e9e5df"/><rect x="1394" y="254" width="2" height="8" fill="#e9e5df"/><rect x="1400" y="204" width="2" height="8" fill="#e9e5df"/><rect x="1400" y="254" width="2" height="8" fill="#e9e5df"/><rect x="1406" y="204" width="2" height="8" fill="#e9e5df"/><rect x="1406" y="254" width="2" height="8" fill="#e9e5df"/><rect x="1393" y="225" width="10" height="16" fill="#efedeb"/><polygon points="1379.00,231.30 1385.00,231.30 1382.00,235.70" fill="#8f8d8b"/><polygon points="1388.00,235.60 1394.00,235.60 1391.00,231.20" fill="#8f8d8b"/><polygon points="1401.00,231.30 1407.00,231.30 1404.00,235.70" fill="#8f8d8b"/><polygon points="1410.00,235.60 1416.00,235.60 1413.00,231.20" fill="#8f8d8b"/><text x="1418.95" y="189.00" font-size="8.6" fill="#85868b" font-family="Liberation Sans">43</text><polygon points="1429.35,188.90 1436.55,188.90 1432.95,183.60" fill="#85868b"/><polygon points="1439.15,183.30 1446.35,183.30 1442.75,188.60" fill="#85868b"/><text x="1448.95" y="189.00" font-size="8.6" fill="#85868b" font-family="Liberation Sans">44</text><rect x="1420" y="198" width="38" height="28" fill="url(#pg)"/><rect x="1420" y="240" width="38" height="28" fill="url(#pg)"/><rect x="1429" y="204" width="2" height="8" fill="#e9e5df"/><rect x="1429" y="254" width="2" height="8" fill="#e9e5df"/><rect x="1435" y="204" width="2" height="8" fill="#e9e5df"/><rect x="1435" y="254" width="2" height="8" fill="#e9e5df"/><rect x="1441" y="204" width="2" height="8" fill="#e9e5df"/><rect x="1441" y="254" width="2" height="8" fill="#e9e5df"/><rect x="1447" y="204" width="2" height="8" fill="#e9e5df"/><rect x="1447" y="254" width="2" height="8" fill="#e9e5df"/><rect x="1434" y="225" width="10" height="16" fill="#efedeb"/><polygon points="1420.00,231.30 1426.00,231.30 1423.00,235.70" fill="#8f8d8b"/><polygon points="1429.00,235.60 1435.00,235.60 1432.00,231.20" fill="#8f8d8b"/><polygon points="1442.00,231.30 1448.00,231.30 1445.00,235.70" fill="#8f8d8b"/><polygon points="1451.00,235.60 1457.00,235.60 1454.00,231.20" fill="#8f8d8b"/><text x="1459.95" y="189.00" font-size="8.6" fill="#85868b" font-family="Liberation Sans">45</text><polygon points="1470.35,188.90 1477.55,188.90 1473.95,183.60" fill="#85868b"/><polygon points="1480.15,183.30 1487.35,183.30 1483.75,188.60" fill="#85868b"/><text x="1489.95" y="189.00" font-size="8.6" fill="#85868b" font-family="Liberation Sans">46</text><rect x="1461" y="198" width="38" height="28" fill="url(#pg)"/><rect x="1461" y="240" width="38" height="28" fill="url(#pg)"/><rect x="1470" y="204" width="2" height="8" fill="#e9e5df"/><rect x="1470" y="254" width="2" height="8" fill="#e9e5df"/><rect x="1476" y="204" width="2" height="8" fill="#e9e5df"/><rect x="1476" y="254" width="2" height="8" fill="#e9e5df"/><rect x="1482" y="204" width="2" height="8" fill="#e9e5df"/><rect x="1482" y="254" width="2" height="8" fill="#e9e5df"/><rect x="1488" y="204" width="2" height="8" fill="#e9e5df"/><rect x="1488" y="254" width="2" height="8" fill="#e9e5df"/><rect x="1475" y="225" width="10" height="16" fill="#efedeb"/><polygon points="1461.00,231.30 1467.00,231.30 1464.00,235.70" fill="#8f8d8b"/><polygon points="1470.00,235.60 1476.00,235.60 1473.00,231.20" fill="#8f8d8b"/><polygon points="1483.00,231.30 1489.00,231.30 1486.00,235.70" fill="#8f8d8b"/><polygon points="1492.00,235.60 1498.00,235.60 1495.00,231.20" fill="#8f8d8b"/><text x="1500.95" y="189.00" font-size="8.6" fill="#85868b" font-family="Liberation Sans">47</text><polygon points="1511.35,188.90 1518.55,188.90 1514.95,183.60" fill="#85868b"/><polygon points="1521.15,183.30 1528.35,183.30 1524.75,188.60" fill="#85868b"/><text x="1530.95" y="189.00" font-size="8.6" fill="#85868b" font-family="Liberation Sans">48</text><rect x="1502" y="198" width="38" height="28" fill="url(#pg)"/><rect x="1502" y="240" width="38" height="28" fill="url(#pg)"/><rect x="1511" y="204" width="2" height="8" fill="#e9e5df"/><rect x="1511" y="254" width="2" height="8" fill="#e9e5df"/><rect x="1517" y="204" width="2" height="8" fill="#e9e5df"/><rect x="1517" y="254" width="2" height="8" fill="#e9e5df"/><rect x="1523" y="204" width="2" height="8" fill="#e9e5df"/><rect x="1523" y="254" width="2" height="8" fill="#e9e5df"/><rect x="1529" y="204" width="2" height="8" fill="#e9e5df"/><rect x="1529" y="254" width="2" height="8" fill="#e9e5df"/><rect x="1516" y="225" width="10" height="16" fill="#efedeb"/><polygon points="1502.00,231.30 1508.00,231.30 1505.00,235.70" fill="#8f8d8b"/><polygon points="1511.00,235.60 1517.00,235.60 1514.00,231.20" fill="#8f8d8b"/><polygon points="1524.00,231.30 1530.00,231.30 1527.00,235.70" fill="#8f8d8b"/><polygon points="1533.00,235.60 1539.00,235.60 1536.00,231.20" fill="#8f8d8b"/><text x="1693.5" y="170" font-size="10" fill="#eef0f3" font-family="Liberation Sans" text-anchor="middle">40G</text><rect x="1619.5" y="191.5" width="158" height="77.5" fill="url(#fr)" stroke="#d9d6d2" stroke-width="1"/><text x="1624.45" y="184.30" font-size="9.2" fill="#eef0f3" font-family="Liberation Sans">49</text><polygon points="1635.45,184.20 1642.95,184.20 1639.20,178.90" fill="#eef0f3"/><polygon points="1649.45,178.60 1656.95,178.60 1653.20,183.90" fill="#eef0f3"/><text x="1658.75" y="184.30" font-size="9.2" fill="#eef0f3" font-family="Liberation Sans">50</text><rect x="1622" y="194" width="49" height="27.5" fill="url(#pg)"/><rect x="1622" y="239" width="49" height="27.5" fill="url(#pg)"/><rect x="1630.0" y="200" width="2" height="8" fill="#e9e5df"/><rect x="1630.0" y="253" width="2" height="8" fill="#e9e5df"/><rect x="1636.1" y="200" width="2" height="8" fill="#e9e5df"/><rect x="1636.1" y="253" width="2" height="8" fill="#e9e5df"/><rect x="1642.2" y="200" width="2" height="8" fill="#e9e5df"/><rect x="1642.2" y="253" width="2" height="8" fill="#e9e5df"/><rect x="1648.3" y="200" width="2" height="8" fill="#e9e5df"/><rect x="1648.3" y="253" width="2" height="8" fill="#e9e5df"/><rect x="1654.4" y="200" width="2" height="8" fill="#e9e5df"/><rect x="1654.4" y="253" width="2" height="8" fill="#e9e5df"/><rect x="1660.5" y="200" width="2" height="8" fill="#e9e5df"/><rect x="1660.5" y="253" width="2" height="8" fill="#e9e5df"/><rect x="1635" y="221" width="22" height="18.5" fill="#edebe9"/><polygon points="1623.25,232.60 1628.75,232.60 1626.00,228.60" fill="#8f8d8b"/><polygon points="1663.25,228.80 1668.75,228.80 1666.00,232.80" fill="#8f8d8b"/><rect x="1633.0" y="228" width="5" height="1.6" fill="#8f8d8b"/><rect x="1633.0" y="231" width="5" height="1.6" fill="#8f8d8b"/><rect x="1639.5" y="228" width="5" height="1.6" fill="#8f8d8b"/><rect x="1639.5" y="231" width="5" height="1.6" fill="#8f8d8b"/><rect x="1646.0" y="228" width="5" height="1.6" fill="#8f8d8b"/><rect x="1646.0" y="231" width="5" height="1.6" fill="#8f8d8b"/><rect x="1652.5" y="228" width="5" height="1.6" fill="#8f8d8b"/><rect x="1652.5" y="231" width="5" height="1.6" fill="#8f8d8b"/><text x="1676.45" y="184.30" font-size="9.2" fill="#eef0f3" font-family="Liberation Sans">51</text><polygon points="1687.45,184.20 1694.95,184.20 1691.20,178.90" fill="#eef0f3"/><polygon points="1701.45,178.60 1708.95,178.60 1705.20,183.90" fill="#eef0f3"/><text x="1710.75" y="184.30" font-size="9.2" fill="#eef0f3" font-family="Liberation Sans">52</text><rect x="1674" y="194" width="49" height="27.5" fill="url(#pg)"/><rect x="1674" y="239" width="49" height="27.5" fill="url(#pg)"/><rect x="1682.0" y="200" width="2" height="8" fill="#e9e5df"/><rect x="1682.0" y="253" width="2" height="8" fill="#e9e5df"/><rect x="1688.1" y="200" width="2" height="8" fill="#e9e5df"/><rect x="1688.1" y="253" width="2" height="8" fill="#e9e5df"/><rect x="1694.2" y="200" width="2" height="8" fill="#e9e5df"/><rect x="1694.2" y="253" width="2" height="8" fill="#e9e5df"/><rect x="1700.3" y="200" width="2" height="8" fill="#e9e5df"/><rect x="1700.3" y="253" width="2" height="8" fill="#e9e5df"/><rect x="1706.4" y="200" width="2" height="8" fill="#e9e5df"/><rect x="1706.4" y="253" width="2" height="8" fill="#e9e5df"/><rect x="1712.5" y="200" width="2" height="8" fill="#e9e5df"/><rect x="1712.5" y="253" width="2" height="8" fill="#e9e5df"/><rect x="1687" y="221" width="22" height="18.5" fill="#edebe9"/><polygon points="1675.25,232.60 1680.75,232.60 1678.00,228.60" fill="#8f8d8b"/><polygon points="1715.25,228.80 1720.75,228.80 1718.00,232.80" fill="#8f8d8b"/><rect x="1685.0" y="228" width="5" height="1.6" fill="#8f8d8b"/><rect x="1685.0" y="231" width="5" height="1.6" fill="#8f8d8b"/><rect x="1691.5" y="228" width="5" height="1.6" fill="#8f8d8b"/><rect x="1691.5" y="231" width="5" height="1.6" fill="#8f8d8b"/><rect x="1698.0" y="228" width="5" height="1.6" fill="#8f8d8b"/><rect x="1698.0" y="231" width="5" height="1.6" fill="#8f8d8b"/><rect x="1704.5" y="228" width="5" height="1.6" fill="#8f8d8b"/><rect x="1704.5" y="231" width="5" height="1.6" fill="#8f8d8b"/><text x="1728.45" y="184.30" font-size="9.2" fill="#eef0f3" font-family="Liberation Sans">53</text><polygon points="1739.45,184.20 1746.95,184.20 1743.20,178.90" fill="#eef0f3"/><polygon points="1753.45,178.60 1760.95,178.60 1757.20,183.90" fill="#eef0f3"/><text x="1762.75" y="184.30" font-size="9.2" fill="#eef0f3" font-family="Liberation Sans">54</text><rect x="1726" y="194" width="49" height="27.5" fill="url(#pg)"/><rect x="1726" y="239" width="49" height="27.5" fill="url(#pg)"/><rect x="1734.0" y="200" width="2" height="8" fill="#e9e5df"/><rect x="1734.0" y="253" width="2" height="8" fill="#e9e5df"/><rect x="1740.1" y="200" width="2" height="8" fill="#e9e5df"/><rect x="1740.1" y="253" width="2" height="8" fill="#e9e5df"/><rect x="1746.2" y="200" width="2" height="8" fill="#e9e5df"/><rect x="1746.2" y="253" width="2" height="8" fill="#e9e5df"/><rect x="1752.3" y="200" width="2" height="8" fill="#e9e5df"/><rect x="1752.3" y="253" width="2" height="8" fill="#e9e5df"/><rect x="1758.4" y="200" width="2" height="8" fill="#e9e5df"/><rect x="1758.4" y="253" width="2" height="8" fill="#e9e5df"/><rect x="1764.5" y="200" width="2" height="8" fill="#e9e5df"/><rect x="1764.5" y="253" width="2" height="8" fill="#e9e5df"/><rect x="1739" y="221" width="22" height="18.5" fill="#edebe9"/><polygon points="1727.25,232.60 1732.75,232.60 1730.00,228.60" fill="#8f8d8b"/><polygon points="1767.25,228.80 1772.75,228.80 1770.00,232.80" fill="#8f8d8b"/><rect x="1737.0" y="228" width="5" height="1.6" fill="#8f8d8b"/><rect x="1737.0" y="231" width="5" height="1.6" fill="#8f8d8b"/><rect x="1743.5" y="228" width="5" height="1.6" fill="#8f8d8b"/><rect x="1743.5" y="231" width="5" height="1.6" fill="#8f8d8b"/><rect x="1750.0" y="228" width="5" height="1.6" fill="#8f8d8b"/><rect x="1750.0" y="231" width="5" height="1.6" fill="#8f8d8b"/><rect x="1756.5" y="228" width="5" height="1.6" fill="#8f8d8b"/><rect x="1756.5" y="231" width="5" height="1.6" fill="#8f8d8b"/><text x="1608.5" y="286" font-size="8" font-weight="700" fill="#eef0f3" font-family="Liberation Sans" textLength="57" lengthAdjust="spacingAndGlyphs">40GE Breakout</text><path d="M1673.5,282 V286.5 H1781.5 V282 M1709.5,282 V286.5 M1745.5,282 V286.5" fill="none" stroke="#eef0f3" stroke-width="1"/><circle cx="1674" cy="279" r="3.2" fill="#565c66"/><text x="1677" y="283.3" font-size="9" fill="#eef0f3" font-family="Liberation Sans">1</text><circle cx="1710" cy="279" r="3.2" fill="#565c66"/><text x="1713" y="283.3" font-size="9" fill="#eef0f3" font-family="Liberation Sans">2</text><circle cx="1746" cy="279" r="3.2" fill="#565c66"/><text x="1749" y="283.3" font-size="9" fill="#eef0f3" font-family="Liberation Sans">3</text><circle cx="1782" cy="279" r="3.2" fill="#565c66"/><text x="1785" y="283.3" font-size="9" fill="#eef0f3" font-family="Liberation Sans">4</text></svg>
<svg style="left:767px;top:312px" width="16" height="14">
<path d="M1,1 H14 V13 H11 V11 H4 V13 H1 Z" fill="#9a9a9a"/>
<rect x="4" y="3" width="1.2" height="4" fill="#fff"/><rect x="6.3" y="3" width="1.2" height="4" fill="#fff"/><rect x="8.6" y="3" width="1.2" height="4" fill="#fff"/><rect x="10.9" y="3" width="1.2" height="4" fill="#fff"/>
</svg>
<div class="t" style="left:784.5px;top:313.00px;font-size:13px;line-height:13px;color:#9b9b9b;font-weight:400;">Optical</div>
<div style="position:absolute;left:845px;top:312px;width:1px;height:13px;background:#dedede;"></div>
<div style="position:absolute;left:866px;top:314px;width:10px;height:10px;background:#4bc75a;"></div>
<div class="t" style="left:880px;top:313.00px;font-size:13px;line-height:13px;color:#9b9b9b;font-weight:400;">Active</div>
<div style="position:absolute;left:935px;top:314px;width:10px;height:10px;background:#8a8a8a;"></div>
<div class="t" style="left:949px;top:313.00px;font-size:13px;line-height:13px;color:#9b9b9b;font-weight:400;">Inactive</div>
<div style="position:absolute;left:1013px;top:314px;width:10px;height:10px;background:#f77c7c;"></div>
<div class="t" style="left:1027.5px;top:313.93px;font-size:12.6px;line-height:12.6px;color:#9b9b9b;font-weight:400;">Disabled</div>
<div style="position:absolute;left:17px;top:378px;width:1810px;height:3px;background:linear-gradient(rgba(0,0,0,0),rgba(0,0,0,0.05));"></div>
<div style="position:absolute;left:17px;top:381px;width:1810px;height:1px;background:#c9c9c9;"></div>
<div class="t" style="left:17.5px;top:396.30px;font-size:15px;line-height:15px;color:#555;font-weight:400;">Device Information</div>
<div style="position:absolute;left:17px;top:425px;width:1810px;height:1px;background:#dcdcdc;"></div>
<div class="t" style="left:27.5px;top:442.33px;font-size:12.6px;line-height:12.6px;color:#9b9b9b;font-weight:400;">Product ID</div>
<div class="t" style="left:187.3px;top:441.50px;font-size:12.4px;line-height:12.4px;color:#555;font-weight:400;">S5850-48S6Q</div>
<div style="position:absolute;left:17px;top:465px;width:582px;height:1px;background-image:linear-gradient(90deg,#d8d8d8 2px,transparent 2px);background-size:3px 1px;"></div>
<div class="t" style="left:27.5px;top:484.33px;font-size:12.6px;line-height:12.6px;color:#9b9b9b;font-weight:400;">Location</div>
<div class="t" style="left:187.3px;top:483.50px;font-size:12.4px;line-height:12.4px;color:#555;font-weight:400;">--</div>
<div style="position:absolute;left:17px;top:507px;width:582px;height:1px;background-image:linear-gradient(90deg,#d8d8d8 2px,transparent 2px);background-size:3px 1px;"></div>
<div class="t" style="left:27.5px;top:526.33px;font-size:12.6px;line-height:12.6px;color:#9b9b9b;font-weight:400;">Device Name</div>
<div class="t" style="left:187.3px;top:525.50px;font-size:12.4px;line-height:12.4px;color:#555;font-weight:400;">Switch</div>
<div style="position:absolute;left:17px;top:549px;width:582px;height:1px;background-image:linear-gradient(90deg,#d8d8d8 2px,transparent 2px);background-size:3px 1px;"></div>
<div class="t" style="left:27.5px;top:568.33px;font-size:12.6px;line-height:12.6px;color:#9b9b9b;font-weight:400;">Contact</div>
<div class="t" style="left:187.3px;top:567.50px;font-size:12.4px;line-height:12.4px;color:#555;font-weight:400;">--</div>
<div style="position:absolute;left:17px;top:591px;width:582px;height:1px;background-image:linear-gradient(90deg,#d8d8d8 2px,transparent 2px);background-size:3px 1px;"></div>
<div class="t" style="left:27.5px;top:610.33px;font-size:12.6px;line-height:12.6px;color:#9b9b9b;font-weight:400;">Software</div>
<div class="t" style="left:187.3px;top:609.50px;font-size:12.4px;line-height:12.4px;color:#555;font-weight:400;">FSOS, 7.2.5.r1</div>
<div style="position:absolute;left:17px;top:633px;width:582px;height:1px;background-image:linear-gradient(90deg,#d8d8d8 2px,transparent 2px);background-size:3px 1px;"></div>
<div class="t" style="left:640.5px;top:442.33px;font-size:12.6px;line-height:12.6px;color:#9b9b9b;font-weight:400;">Image Name</div>
<div class="t" style="left:800.3px;top:441.50px;font-size:12.4px;line-height:12.4px;color:#555;font-weight:400;">FSOS-S5850-Series-Switches-v7.2.5.r1.r.bin</div>
<div style="position:absolute;left:630px;top:465px;width:583px;height:1px;background-image:linear-gradient(90deg,#d8d8d8 2px,transparent 2px);background-size:3px 1px;"></div>
<div class="t" style="left:640.5px;top:484.33px;font-size:12.6px;line-height:12.6px;color:#9b9b9b;font-weight:400;">WebImage Name</div>
<div class="t" style="left:800.3px;top:483.50px;font-size:12.4px;line-height:12.4px;color:#555;font-weight:400;">flash:/FSOS-webImage-v7.2.5.r1.bin</div>
<div style="position:absolute;left:630px;top:507px;width:583px;height:1px;background-image:linear-gradient(90deg,#d8d8d8 2px,transparent 2px);background-size:3px 1px;"></div>
<div class="t" style="left:640.5px;top:526.33px;font-size:12.6px;line-height:12.6px;color:#9b9b9b;font-weight:400;">BootRom Version</div>
<div class="t" style="left:800.3px;top:525.50px;font-size:12.4px;line-height:12.4px;color:#555;font-weight:400;">8.1.7</div>
<div style="position:absolute;left:630px;top:549px;width:583px;height:1px;background-image:linear-gradient(90deg,#d8d8d8 2px,transparent 2px);background-size:3px 1px;"></div>
<div class="t" style="left:640.5px;top:568.33px;font-size:12.6px;line-height:12.6px;color:#9b9b9b;font-weight:400;">Hardware Version</div>
<div class="t" style="left:800.3px;top:567.50px;font-size:12.4px;line-height:12.4px;color:#555;font-weight:400;">2.0</div>
<div style="position:absolute;left:630px;top:591px;width:583px;height:1px;background-image:linear-gradient(90deg,#d8d8d8 2px,transparent 2px);background-size:3px 1px;"></div>
<div class="t" style="left:640.5px;top:610.33px;font-size:12.6px;line-height:12.6px;color:#9b9b9b;font-weight:400;">EPLD Version</div>
<div class="t" style="left:800.3px;top:609.50px;font-size:12.4px;line-height:12.4px;color:#555;font-weight:400;">2.3</div>
<div style="position:absolute;left:630px;top:633px;width:583px;height:1px;background-image:linear-gradient(90deg,#d8d8d8 2px,transparent 2px);background-size:3px 1px;"></div>
<div class="t" style="left:1253.5px;top:442.33px;font-size:12.6px;line-height:12.6px;color:#9b9b9b;font-weight:400;">Serial Number</div>
<div class="t" style="left:1413.3px;top:441.50px;font-size:12.4px;line-height:12.4px;color:#555;font-weight:400;">CG2106249821N00013</div>
<div style="position:absolute;left:1243px;top:465px;width:584px;height:1px;background-image:linear-gradient(90deg,#d8d8d8 2px,transparent 2px);background-size:3px 1px;"></div>
<div class="t" style="left:1253.5px;top:484.33px;font-size:12.6px;line-height:12.6px;color:#9b9b9b;font-weight:400;">MAC Address</div>
<div class="t" style="left:1413.3px;top:483.50px;font-size:12.4px;line-height:12.4px;color:#555;font-weight:400;">64:9D:99:04:70:09</div>
<div style="position:absolute;left:1243px;top:507px;width:584px;height:1px;background-image:linear-gradient(90deg,#d8d8d8 2px,transparent 2px);background-size:3px 1px;"></div>
<div class="t" style="left:1253.5px;top:526.33px;font-size:12.6px;line-height:12.6px;color:#9b9b9b;font-weight:400;">Uptime</div>
<div class="t" style="left:1413.3px;top:525.50px;font-size:12.4px;line-height:12.4px;color:#555;font-weight:400;">0 days, 0 hours, 12 minutes</div>
<div style="position:absolute;left:1243px;top:549px;width:584px;height:1px;background-image:linear-gradient(90deg,#d8d8d8 2px,transparent 2px);background-size:3px 1px;"></div>
<div class="t" style="left:1253.5px;top:568.33px;font-size:12.6px;line-height:12.6px;color:#9b9b9b;font-weight:400;">PWR 1</div>
<div class="t" style="left:1413.3px;top:567.50px;font-size:12.4px;line-height:12.4px;color:#555;font-weight:400;">PRESENT ; OK ; AC</div>
<div style="position:absolute;left:1243px;top:591px;width:584px;height:1px;background-image:linear-gradient(90deg,#d8d8d8 2px,transparent 2px);background-size:3px 1px;"></div>
<div class="t" style="left:1253.5px;top:610.33px;font-size:12.6px;line-height:12.6px;color:#9b9b9b;font-weight:400;">PWR 2</div>
<div class="t" style="left:1413.3px;top:609.50px;font-size:12.4px;line-height:12.4px;color:#555;font-weight:400;">PRESENT ; FAIL ; -</div>
<div style="position:absolute;left:1243px;top:633px;width:584px;height:1px;background-image:linear-gradient(90deg,#d8d8d8 2px,transparent 2px);background-size:3px 1px;"></div>
<div style="position:absolute;left:17px;top:658px;width:1810px;height:1px;background:#cacaca;"></div>
<div style="position:absolute;left:17px;top:659px;width:1810px;height:4px;background:linear-gradient(rgba(0,0,0,0.09),rgba(0,0,0,0));"></div>
<div style="position:absolute;left:17px;top:711px;width:562px;height:3px;background:linear-gradient(rgba(0,0,0,0),rgba(0,0,0,0.05));"></div>
<div style="position:absolute;left:17px;top:714px;width:562px;height:1px;background:#c9c9c9;"></div>
<div class="t" style="left:17.5px;top:729.30px;font-size:15px;line-height:15px;color:#555;font-weight:400;">Usage</div>
<div style="position:absolute;left:17px;top:758px;width:562px;height:1px;background:#dcdcdc;"></div>
<div style="position:absolute;left:17px;top:1071px;width:562px;height:1px;background:#cacaca;"></div>
<div style="position:absolute;left:17px;top:1072px;width:562px;height:4px;background:linear-gradient(rgba(0,0,0,0.09),rgba(0,0,0,0));"></div>
<div style="position:absolute;left:609px;top:711px;width:594px;height:3px;background:linear-gradient(rgba(0,0,0,0),rgba(0,0,0,0.05));"></div>
<div style="position:absolute;left:609px;top:714px;width:594px;height:1px;background:#c9c9c9;"></div>
<div class="t" style="left:609.5px;top:729.30px;font-size:15px;line-height:15px;color:#555;font-weight:400;">Temperature</div>
<div style="position:absolute;left:609px;top:758px;width:594px;height:1px;background:#dcdcdc;"></div>
<div style="position:absolute;left:609px;top:1071px;width:594px;height:1px;background:#cacaca;"></div>
<div style="position:absolute;left:609px;top:1072px;width:594px;height:4px;background:linear-gradient(rgba(0,0,0,0.09),rgba(0,0,0,0));"></div>
<div style="position:absolute;left:1233px;top:711px;width:594px;height:3px;background:linear-gradient(rgba(0,0,0,0),rgba(0,0,0,0.05));"></div>
<div style="position:absolute;left:1233px;top:714px;width:594px;height:1px;background:#c9c9c9;"></div>
<div class="t" style="left:1233.5px;top:729.30px;font-size:15px;line-height:15px;color:#555;font-weight:400;">Fan</div>
<div style="position:absolute;left:1233px;top:758px;width:594px;height:1px;background:#dcdcdc;"></div>
<div style="position:absolute;left:1233px;top:1071px;width:594px;height:1px;background:#cacaca;"></div>
<div style="position:absolute;left:1233px;top:1072px;width:594px;height:4px;background:linear-gradient(rgba(0,0,0,0.09),rgba(0,0,0,0));"></div>
<svg style="left:0;top:0" width="1842" height="1090"><defs><pattern id="hatch" width="2" height="10" patternUnits="userSpaceOnUse"><rect x="0" y="0" width="0.9" height="10" fill="#c9c9c9"/></pattern><linearGradient id="gg" x1="0" y1="0" x2="0.3" y2="1"><stop offset="0" stop-color="#72e41e"/><stop offset="1" stop-color="#3fd634"/></linearGradient><radialGradient id="sh" cx="0.5" cy="0.5" r="0.5"><stop offset="0" stop-color="#000" stop-opacity="0.16"/><stop offset="0.6" stop-color="#000" stop-opacity="0.06"/><stop offset="1" stop-color="#000" stop-opacity="0"/></radialGradient></defs><ellipse cx="162.5" cy="1010" rx="68" ry="10" fill="url(#sh)"/><path d="M203.64,990.63 A70,70 0 1 1 162.50,864.00 L162.50,886.00 A48,48 0 1 0 190.71,972.83 Z" fill="url(#hatch)"/><path d="M162.50,864.00 A70,70 0 0 1 203.64,990.63 L190.71,972.83 A48,48 0 0 0 162.50,886.00 Z" fill="url(#gg)"/><ellipse cx="434.5" cy="1010" rx="68" ry="10" fill="url(#sh)"/><path d="M472.01,993.10 A70,70 0 1 1 434.50,864.00 L434.50,886.00 A48,48 0 1 0 460.22,974.53 Z" fill="url(#hatch)"/><path d="M434.50,864.00 A70,70 0 0 1 472.01,993.10 L460.22,974.53 A48,48 0 0 0 434.50,886.00 Z" fill="url(#gg)"/></svg>
<div class="t" style="left:-137.5px;width:600px;text-align:center;top:840.67px;font-size:12.2px;line-height:12.2px;color:#666;font-weight:400;">CPU Usage</div>
<div class="t" style="left:-137.5px;width:600px;text-align:center;top:915.76px;font-size:31px;line-height:31px;color:#666;font-weight:400;">40%</div>
<div class="t" style="left:134.5px;width:600px;text-align:center;top:840.67px;font-size:12.2px;line-height:12.2px;color:#666;font-weight:400;">Memory Usage</div>
<div class="t" style="left:134.5px;width:600px;text-align:center;top:915.76px;font-size:31px;line-height:31px;color:#666;font-weight:400;">41%</div>
<svg style="left:0;top:0" width="1842" height="1090"><defs><linearGradient id="og" x1="0" y1="0" x2="0" y2="1"><stop offset="0" stop-color="#fca23a"/><stop offset="1" stop-color="#f78a2a"/></linearGradient></defs><text x="650" y="999.3" font-size="10.5" fill="#888" font-family="Liberation Sans" text-anchor="end" >0℃</text><text x="650" y="946.55" font-size="10.5" fill="#888" font-family="Liberation Sans" text-anchor="end" >25℃</text><text x="650" y="893.8" font-size="10.5" fill="#888" font-family="Liberation Sans" text-anchor="end" >50℃</text><text x="650" y="841.05" font-size="10.5" fill="#888" font-family="Liberation Sans" text-anchor="end" >75℃</text><text x="650" y="788.3" font-size="10.5" fill="#888" font-family="Liberation Sans" text-anchor="end" >100℃</text><path d="M665.5,995.5 H1193.5" stroke="#dcdcdc" stroke-width="1"/><path d="M665.5,995.5 V1002" stroke="#dcdcdc" stroke-width="1"/><path d="M841.5,995.5 V1002" stroke="#dcdcdc" stroke-width="1"/><path d="M1017.5,995.5 V1002" stroke="#dcdcdc" stroke-width="1"/><path d="M1193.5,995.5 V1002" stroke="#dcdcdc" stroke-width="1"/><rect x="741.0" y="934.3" width="25" height="61.2" fill="url(#og)"/><text x="753.5" y="926.0" font-size="11" fill="#f5a64a" font-family="Liberation Sans" text-anchor="middle" letter-spacing="0.6">29</text><text x="753.5" y="1014.5" font-size="10.8" fill="#777" font-family="Liberation Sans" text-anchor="middle" >AROUND_CHIP</text><rect x="917.0" y="930.1" width="25" height="65.4" fill="url(#og)"/><text x="929.5" y="921.8" font-size="11" fill="#f5a64a" font-family="Liberation Sans" text-anchor="middle" letter-spacing="0.6">31</text><text x="929.5" y="1014.5" font-size="10.8" fill="#777" font-family="Liberation Sans" text-anchor="middle" >AROUND_CHIP</text><rect x="1093.0" y="890.0" width="25" height="105.5" fill="url(#og)"/><text x="1105.5" y="881.7" font-size="11" fill="#f5a64a" font-family="Liberation Sans" text-anchor="middle" letter-spacing="0.6">50</text><text x="1105.5" y="1014.5" font-size="10.8" fill="#777" font-family="Liberation Sans" text-anchor="middle" >SWITCH_CHIP</text><rect x="864" y="1037" width="11" height="11" fill="#fbb244"/><text x="883.5" y="1047" font-size="12" fill="#888" font-family="Liberation Sans" text-anchor="start" >temperature</text><text x="1272.5" y="999.3" font-size="10.5" fill="#888" font-family="Liberation Sans" text-anchor="end" >0%</text><text x="1272.5" y="946.55" font-size="10.5" fill="#888" font-family="Liberation Sans" text-anchor="end" >25%</text><text x="1272.5" y="893.8" font-size="10.5" fill="#888" font-family="Liberation Sans" text-anchor="end" >50%</text><text x="1272.5" y="841.05" font-size="10.5" fill="#888" font-family="Liberation Sans" text-anchor="end" >75%</text><text x="1272.5" y="788.3" font-size="10.5" fill="#888" font-family="Liberation Sans" text-anchor="end" >100%</text><path d="M1287.3,995.5 H1816.5" stroke="#dcdcdc" stroke-width="1"/><path d="M1287.3,995.5 V1002" stroke="#dcdcdc" stroke-width="1"/><path d="M1419.6,995.5 V1002" stroke="#dcdcdc" stroke-width="1"/><path d="M1551.9,995.5 V1002" stroke="#dcdcdc" stroke-width="1"/><path d="M1684.2,995.5 V1002" stroke="#dcdcdc" stroke-width="1"/><path d="M1816.5,995.5 V1002" stroke="#dcdcdc" stroke-width="1"/><rect x="1341.0" y="911.1" width="25" height="84.4" fill="#2bdb45"/><text x="1353.5" y="902.8" font-size="11" fill="#3cbf5a" font-family="Liberation Sans" text-anchor="middle" letter-spacing="0.6">40</text><text x="1353.5" y="1014.5" font-size="10.8" fill="#777" font-family="Liberation Sans" text-anchor="middle" letter-spacing="1.2">1-1</text><rect x="1473.2" y="911.1" width="25" height="84.4" fill="#2bdb45"/><text x="1485.8" y="902.8" font-size="11" fill="#3cbf5a" font-family="Liberation Sans" text-anchor="middle" letter-spacing="0.6">40</text><text x="1485.8" y="1014.5" font-size="10.8" fill="#777" font-family="Liberation Sans" text-anchor="middle" letter-spacing="1.2">1-2</text><rect x="1605.5" y="911.1" width="25" height="84.4" fill="#2bdb45"/><text x="1618.0" y="902.8" font-size="11" fill="#3cbf5a" font-family="Liberation Sans" text-anchor="middle" letter-spacing="0.6">40</text><text x="1618.0" y="1014.5" font-size="10.8" fill="#777" font-family="Liberation Sans" text-anchor="middle" letter-spacing="1.2">1-3</text><rect x="1737.8" y="911.1" width="25" height="84.4" fill="#2bdb45"/><text x="1750.3" y="902.8" font-size="11" fill="#3cbf5a" font-family="Liberation Sans" text-anchor="middle" letter-spacing="0.6">40</text><text x="1750.3" y="1014.5" font-size="10.8" fill="#777" font-family="Liberation Sans" text-anchor="middle" letter-spacing="1.2">1-4</text><rect x="1480" y="1036" width="11" height="11" fill="#1ecf5a"/><text x="1496" y="1046.5" font-size="12" fill="#888" font-family="Liberation Sans" text-anchor="start" >OK</text><rect x="1532" y="1036" width="11" height="11" fill="#f56c62"/><text x="1549" y="1046.5" font-size="12" fill="#888" font-family="Liberation Sans" text-anchor="start" >Failed</text></svg>
</body></html>
